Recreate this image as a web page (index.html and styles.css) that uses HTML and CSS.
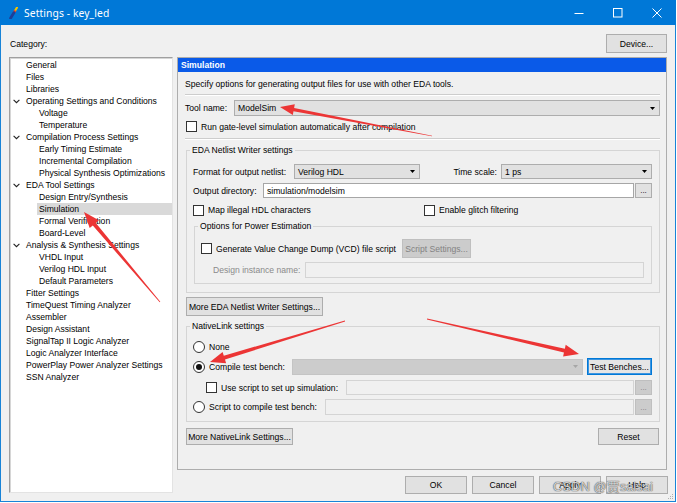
FILE: index.html
```html
<!DOCTYPE html>
<html>
<head>
<meta charset="utf-8">
<title>Settings - key_led</title>
<link rel="stylesheet" href="styles.css">
</head>
<body>
<div class="window">
  <div class="titlebar">
    <svg class="app-icon" width="9" height="12" viewBox="0 0 9 12">
      <path d="M8 0.5 L6.2 3.5" stroke="#f2c200" stroke-width="2.2" stroke-linecap="round"/>
      <path d="M6.2 3.5 L5 5.6" stroke="#e8402a" stroke-width="2.4"/>
      <path d="M5 5.6 L1.5 11.2" stroke="#1d3f9a" stroke-width="2.8" stroke-linecap="round"/>
    </svg>
    <span class="title">Settings - key_led</span>
    <div class="controls">
      <span class="ctl"><svg width="10" height="10" viewBox="0 0 10 10"><path d="M0.5 5.5h9" stroke="#fff" stroke-width="1"/></svg></span>
      <span class="ctl"><svg width="10" height="10" viewBox="0 0 10 10"><rect x="0.5" y="0.5" width="8.5" height="8.5" fill="none" stroke="#fff" stroke-width="1"/></svg></span>
      <span class="ctl"><svg width="10" height="10" viewBox="0 0 10 10"><path d="M0.5 0.5L9.5 9.5M9.5 0.5L0.5 9.5" stroke="#fff" stroke-width="1"/></svg></span>
    </div>
  </div>

  <div class="frame">
    <div class="toprow">
      <span class="cat">Category:</span>
      <button class="btn device">Device...</button>
    </div>

    <div class="main">
      <ul class="tree">
        <li class="l0">General</li>
        <li class="l0">Files</li>
        <li class="l0">Libraries</li>
        <li class="l0 parent"><svg class="chev" width="7" height="5" viewBox="0 0 7 5"><path d="M0.6 0.8 L3.5 3.7 L6.4 0.8" fill="none" stroke="#222" stroke-width="1.1"/></svg>Operating Settings and Conditions</li>
        <li class="l1">Voltage</li>
        <li class="l1">Temperature</li>
        <li class="l0 parent"><svg class="chev" width="7" height="5" viewBox="0 0 7 5"><path d="M0.6 0.8 L3.5 3.7 L6.4 0.8" fill="none" stroke="#222" stroke-width="1.1"/></svg>Compilation Process Settings</li>
        <li class="l1">Early Timing Estimate</li>
        <li class="l1">Incremental Compilation</li>
        <li class="l1">Physical Synthesis Optimizations</li>
        <li class="l0 parent"><svg class="chev" width="7" height="5" viewBox="0 0 7 5"><path d="M0.6 0.8 L3.5 3.7 L6.4 0.8" fill="none" stroke="#222" stroke-width="1.1"/></svg>EDA Tool Settings</li>
        <li class="l1">Design Entry/Synthesis</li>
        <li class="l1 selected">Simulation</li>
        <li class="l1">Formal Verification</li>
        <li class="l1">Board-Level</li>
        <li class="l0 parent"><svg class="chev" width="7" height="5" viewBox="0 0 7 5"><path d="M0.6 0.8 L3.5 3.7 L6.4 0.8" fill="none" stroke="#222" stroke-width="1.1"/></svg>Analysis &amp; Synthesis Settings</li>
        <li class="l1">VHDL Input</li>
        <li class="l1">Verilog HDL Input</li>
        <li class="l1">Default Parameters</li>
        <li class="l0">Fitter Settings</li>
        <li class="l0">TimeQuest Timing Analyzer</li>
        <li class="l0">Assembler</li>
        <li class="l0">Design Assistant</li>
        <li class="l0">SignalTap II Logic Analyzer</li>
        <li class="l0">Logic Analyzer Interface</li>
        <li class="l0">PowerPlay Power Analyzer Settings</li>
        <li class="l0">SSN Analyzer</li>
      </ul>

      <div class="right">
        <div class="panel">
          <div class="panel-head">Simulation</div>
          <div class="panel-body">
            <div class="desc">Specify options for generating output files for use with other EDA tools.</div>
            <div class="sep sep-a"></div>

            <div class="row row-tool">
              <span class="lbl w-tool">Tool name:</span>
              <div class="combo grow"><span>ModelSim</span><svg class="arrow" width="5" height="3" viewBox="0 0 5 3"><path d="M0 0h5L2.5 3z" fill="#000"/></svg></div>
            </div>

            <div class="row row-check">
              <span class="cb"></span><span class="cb-text">Run gate-level simulation automatically after compilation</span>
            </div>
            <div class="sep sep-b"></div>

            <fieldset class="group eda">
              <legend>EDA Netlist Writer settings</legend>
              <div class="row row-format">
                <span class="lbl w-format">Format for output netlist:</span>
                <div class="combo w-fcombo"><span>Verilog HDL</span><svg class="arrow" width="5" height="3" viewBox="0 0 5 3"><path d="M0 0h5L2.5 3z" fill="#000"/></svg></div>
                <span class="lbl ts-label">Time scale:</span>
                <div class="combo w-tcombo"><span>1 ps</span><svg class="arrow" width="5" height="3" viewBox="0 0 5 3"><path d="M0 0h5L2.5 3z" fill="#000"/></svg></div>
              </div>
              <div class="row row-outdir">
                <span class="lbl w-outdir">Output directory:</span>
                <div class="input grow">simulation/modelsim</div>
                <button class="btn dots">...</button>
              </div>
              <div class="row row-map">
                <div class="check-item w-map"><span class="cb"></span><span class="cb-text">Map illegal HDL characters</span></div>
                <div class="check-item"><span class="cb"></span><span class="cb-text">Enable glitch filtering</span></div>
              </div>

              <fieldset class="group power">
                <legend>Options for Power Estimation</legend>
                <div class="row row-vcd">
                  <span class="cb"></span><span class="cb-text w-vcd">Generate Value Change Dump (VCD) file script</span>
                  <button class="btn disabled script-btn">Script Settings...</button>
                </div>
                <div class="row row-inst">
                  <span class="lbl disabled-text w-inst">Design instance name:</span>
                  <div class="input disabled grow"></div>
                </div>
              </fieldset>
            </fieldset>

            <button class="btn more-eda">More EDA Netlist Writer Settings...</button>

            <fieldset class="group native">
              <legend>NativeLink settings</legend>
              <div class="row row-none">
                <span class="rb"></span><span class="cb-text">None</span>
              </div>
              <div class="row row-compile">
                <div class="check-item w-compile"><span class="rb checked"></span><span class="cb-text">Compile test bench:</span></div>
                <div class="combo disabled w-ccombo"><span></span><svg class="arrow" width="5" height="3" viewBox="0 0 5 3"><path d="M0 0h5L2.5 3z" fill="#a6a6a6"/></svg></div>
                <button class="btn focus tb-btn">Test Benches...</button>
              </div>
              <div class="row row-use">
                <div class="check-item w-use"><span class="cb"></span><span class="cb-text">Use script to set up simulation:</span></div>
                <div class="input disabled grow"></div>
                <button class="btn dots disabled">...</button>
              </div>
              <div class="row row-script">
                <div class="check-item w-script"><span class="rb"></span><span class="cb-text">Script to compile test bench:</span></div>
                <div class="input disabled grow"></div>
                <button class="btn dots disabled">...</button>
              </div>
            </fieldset>

            <div class="row row-bottom">
              <button class="btn more-native">More NativeLink Settings...</button>
              <button class="btn reset">Reset</button>
            </div>
          </div>
        </div>

        <div class="dlg-buttons">
          <button class="btn dlg">OK</button>
          <button class="btn dlg">Cancel</button>
          <button class="btn dlg">Apply</button>
          <button class="btn dlg">Help</button>
        </div>
      </div>
    </div>
  </div>

  <svg class="annot" width="677" height="503" viewBox="0 0 677 503">
    <g fill="#ec3535">
      <polygon points="432.06,135.7 294.1,108.0 294.8,104.2 280,107 292.8,115.0 293.5,111.2 431.94,136.3"/>
      <polygon points="160.3,301.7 95.8,222.9 98.9,220.3 84,212 89.7,228.1 92.8,225.5 159.7,302.3"/>
      <polygon points="344.9,320.6 223.8,355.7 222.6,351.9 210,362 226.1,363.3 225.0,359.5 345.1,321.4"/>
      <polygon points="426.9,319.4 563.95,352.55 563.1,356.4 579,354 565.7,344.8 564.85,348.65 427.1,318.6"/>
    </g>
  </svg>
  <div class="watermark">CSDN @贾saisai</div>
  <svg class="grip" width="6" height="6" viewBox="0 0 6 6"><g fill="#b0b0b0"><rect x="4" y="0" width="1" height="1"/><rect x="2" y="2" width="1" height="1"/><rect x="4" y="2" width="1" height="1"/><rect x="0" y="4" width="1" height="1"/><rect x="2" y="4" width="1" height="1"/><rect x="4" y="4" width="1" height="1"/></g></svg>
</div>
</body>
</html>
```

FILE: styles.css
```css
* { box-sizing: border-box; }
html, body { margin: 0; padding: 0; background: #ffffff; }
body {
  font-family: "Liberation Sans", Arial, sans-serif;
  font-size: 8.6px;
  color: #000;
}

.window { position: relative; width: 676px; height: 502px; }

/* title bar */
.titlebar {
  height: 25px;
  background: #0078d7;
  display: flex;
  align-items: center;
  color: #fff;
}
.app-icon { margin-left: 9px; display: block; }
.title {
  margin-left: 6px;
  font-family: "Noto Sans", "Open Sans", sans-serif;
  font-size: 10.3px;
  letter-spacing: 0.1px;
}
.controls { margin-left: auto; display: flex; height: 25px; }
.ctl { width: 39px; height: 25px; display: flex; align-items: center; justify-content: center; }

/* window body */
.frame {
  height: 477px;
  background: #f0f0f0;
  border: 1px solid #1883d7;
  border-top: none;
  padding: 9px 8px 0 8px;
}
.toprow {
  height: 19px;
  display: flex;
  align-items: center;
  justify-content: space-between;
}
.cat { padding-left: 1px; }

.btn {
  font-family: inherit;
  font-size: 8.6px;
  color: #000;
  margin: 0;
  padding: 0;
  background: #e1e1e1;
  border: 1px solid #adadad;
  display: flex;
  align-items: center;
  justify-content: center;
  white-space: nowrap;
}
.btn.disabled { background: #cccccc; border-color: #bfbfbf; color: #838383; }
.btn.focus { border-color: #0078d7; box-shadow: inset 0 0 0 1px #3d95e0; background: #e5e5e5; }
.device { width: 61px; height: 19px; }

.main { display: flex; gap: 4px; margin-top: 4px; }

/* tree */
.tree {
  list-style: none;
  margin: 0;
  padding: 1px 0 0 0;
  width: 164px;
  height: 436px;
  background: #fff;
  border: 1px solid;
  border-color: #a0a0a0 #e3e3e3 #e3e3e3 #a0a0a0;
  box-shadow: inset 1px 1px 0 #d6d6d6;
}
.tree li {
  height: 12px;
  line-height: 12px;
  display: flex;
  align-items: center;
  white-space: nowrap;
}
.tree .l0 { padding-left: 16px; }
.tree .l0.parent { padding-left: 3px; }
.tree .chev { margin-right: 6px; flex: none; }
.tree .l1 { margin-left: 27px; padding-left: 2px; }
.tree .selected { background: #d9d9d9; }

/* right column */
.right { width: 490px; display: flex; flex-direction: column; }
.panel { height: 413px; border: 1px solid #adadad; }
.panel-head {
  height: 14px;
  line-height: 14px;
  background: #0a5ae8;
  color: #fff;
  font-weight: bold;
  padding-left: 3px;
}
.panel-body { padding: 0 6px 0 7px; }

.desc { margin-top: 6px; line-height: 12px; height: 12px; white-space: nowrap; }
.sep { height: 2px; border-top: 1px solid #cdcdcd; border-bottom: 1px solid #ffffff; }
.sep-a { margin-top: 4px; }
.sep-b { margin-top: 5px; }

.row { display: flex; align-items: center; white-space: nowrap; }
.lbl { flex: none; }
.grow { flex: 1; min-width: 0; }

.combo {
  height: 100%;
  background: #e1e1e1;
  border: 1px solid #adadad;
  display: flex;
  align-items: center;
  padding: 0 4px 0 3px;
  justify-content: space-between;
}
.combo.disabled { background: #cccccc; border-color: #c4c4c4; }
.arrow { display: block; flex: none; }

.input {
  height: 100%;
  background: #fff;
  border: 1px solid #a6a6a6;
  display: flex;
  align-items: center;
  padding-left: 3px;
}
.input.disabled { background: #f0f0f0; border-color: #d4d4d4; }
.disabled-text { color: #8a8a8a; }

.cb {
  flex: none;
  width: 11px;
  height: 11px;
  background: #fff;
  border: 1px solid #333;
}
.rb {
  flex: none;
  width: 12px;
  height: 12px;
  border-radius: 50%;
  background: #fff;
  border: 1px solid #333;
  display: flex;
  align-items: center;
  justify-content: center;
}
.rb.checked::after {
  content: "";
  width: 6px;
  height: 6px;
  border-radius: 50%;
  background: #111;
}
.cb-text { margin-left: 4px; }
.check-item { display: flex; align-items: center; flex: none; }

.row-tool { margin-top: 4px; height: 16px; }
.w-tool { width: 49px; }
.row-check { margin-top: 4px; height: 13px; padding-left: 1px; }

/* group boxes */
.group {
  margin: 0;
  min-width: 0;
  border: 1px solid #d5d5d5;
}
.group legend {
  padding: 0 2px;
  height: 12px;
  line-height: 12px;
  margin-left: -3px;
}
.eda { margin: 4px 0 0 1px; padding: 8px 7px 8px 6px; }
.row-format { height: 15px; }
.w-format { width: 101px; }
.w-fcombo { width: 126px; }
.ts-label { margin-left: auto; margin-right: 4px; }
.w-tcombo { width: 151px; }
.row-outdir { margin-top: 4px; height: 15px; }
.w-outdir { width: 70px; }
.dots { width: 17px; height: 100%; margin-left: 1px; font-size: 8px; flex: none; }
.row-map { margin-top: 6px; height: 12px; }
.w-map { width: 231px; }

.power { margin: 4px 0 0 1px; padding: 7px 7px 5px 6px; }
.row-vcd { height: 19px; }
.w-vcd { width: 182px; }
.script-btn { width: 69px; height: 19px; margin-left: 4px; }
.row-inst { margin-top: 4px; height: 16px; }
.w-inst { width: 92px; padding-left: 12px; width: 104px; }

.more-eda { margin: 4px 0 0 1px; width: 137px; height: 19px; }

.native { margin: 4px 0 0 1px; padding: 8px 7px 6px 6px; }
.row-none { height: 13px; }
.row-compile { margin-top: 5px; height: 17px; }
.w-compile { width: 99px; }
.w-ccombo { width: 291px; height: 16px; }
.tb-btn { width: 65px; height: 17px; margin-left: 4px; }
.row-use { margin-top: 5px; height: 15px; }
.w-use { width: 153px; padding-left: 13px; }
.row-script { margin-top: 4px; height: 16px; }
.w-script { width: 132px; }

.row-bottom { margin: 6px 1px 0 1px; height: 17px; justify-content: space-between; }
.more-native { width: 107px; height: 17px; }
.reset { width: 61px; height: 17px; }

.dlg-buttons {
  margin-top: 6px;
  margin-right: -1px;
  display: flex;
  justify-content: flex-end;
  gap: 5px;
}
.dlg { width: 62px; height: 18px; }

/* overlays */
.annot { position: absolute; left: 0; top: 0; pointer-events: none; }
.watermark {
  position: absolute;
  left: 553px;
  top: 476px;
  font-family: "Liberation Sans", "Noto Sans CJK SC", sans-serif;
  font-size: 13px;
  color: rgba(255, 255, 255, 0.75);
  text-shadow: 0 0 1px rgba(60, 60, 60, 0.9), 0 0 1px rgba(60, 60, 60, 0.9);
  pointer-events: none;
  white-space: nowrap;
}
.grip { position: absolute; left: 668px; top: 494px; }
```
